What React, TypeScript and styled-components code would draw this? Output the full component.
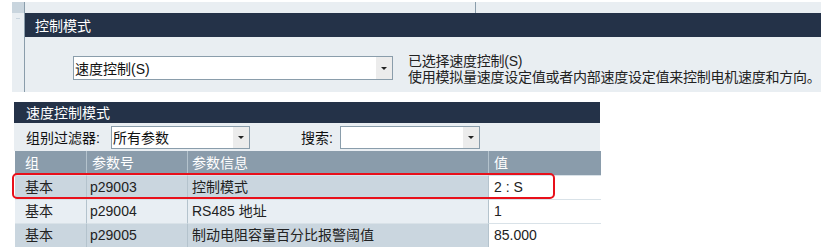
import styled, { createGlobalStyle } from "styled-components";

const GlobalStyle = createGlobalStyle`
  body {
    margin: 0;
    background: #ffffff;
    font-family: "Liberation Sans", "Noto Sans CJK SC", sans-serif;
  }
`;

const Page = styled.div`
  width: 822px;
  height: 249px;
  overflow: hidden;
  background: #ffffff;
  padding-top: 2px;
  box-sizing: border-box;
`;

// 上面的控制模式面板
const TopPanel = styled.div`
  margin-left: 12px;
  width: 809px;
  height: 90px;
  background: #e9eef2;
  display: flex;
`;

const Gutter = styled.div`
  width: 12px;
  flex-shrink: 0;
  border-right: 1px solid #8a9dab;
  display: flex;
  flex-direction: column;
`;

const GutterCap = styled.div`
  height: 11px;
  background: #c9d5de;
  border-bottom: 5px solid #e9eef2;
  box-shadow: 0 5px 0 -4px #c9d5de;
`;

const TopMain = styled.div`
  flex: 1;
  min-width: 0;
  display: flex;
  flex-direction: column;
`;

const TopStrip = styled.div`
  height: 11px;
  display: flex;
`;

const StripCell = styled.div`
  width: 450px;
  border-right: 1px solid #8a9dab;
`;

const SectionHeader = styled.div<{ $h: number; $pad: number }>`
  height: ${(p) => p.$h}px;
  line-height: ${(p) => p.$h}px;
  background: #243248;
  color: #ffffff;
  font-size: 14px;
  padding-left: ${(p) => p.$pad}px;
  font-family: "Noto Sans CJK SC", sans-serif;
`;

const ModeRow = styled.div`
  display: flex;
  align-items: flex-start;
  padding: 19px 0 0 48px;
`;

const Select = styled.div<{ $w: number; $h: number }>`
  width: ${(p) => p.$w}px;
  height: ${(p) => p.$h}px;
  box-sizing: border-box;
  border: 1px solid #8a9dab;
  background: #ffffff;
  display: flex;
  flex-shrink: 0;
`;

const SelectText = styled.div`
  flex: 1;
  padding-left: 1px;
  font-size: 14px;
  color: #111;
  display: flex;
  align-items: center;
  white-space: nowrap;
`;

const ArrowBox = styled.div`
  width: 16px;
  background: #ececec;
  display: flex;
  align-items: center;
  justify-content: center;
`;

const Arrow = styled.div`
  width: 0;
  height: 0;
  border-left: 3px solid transparent;
  border-right: 3px solid transparent;
  border-top: 3px solid #222;
`;

const Desc = styled.div`
  flex: 1;
  margin: -3px 0 0 15px;
  font-size: 14px;
  line-height: 16px;
  letter-spacing: -0.25px;
  color: #222;
  white-space: nowrap;
`;

// 下面的速度控制模式面板
const Panel = styled.div`
  position: relative;
  margin: 10px 0 0 14px;
  width: 586px;
`;

const FilterRow = styled.div`
  height: 28px;
  background: #e9eef2;
  display: flex;
  align-items: center;
  padding-left: 12px;
  font-size: 14px;
  color: #111;
`;

const Label = styled.span<{ $ml?: number; $mr: number }>`
  margin-left: ${(p) => p.$ml ?? 0}px;
  margin-right: ${(p) => p.$mr}px;
  white-space: nowrap;
`;

const Table = styled.div`
  margin-left: 1px;
  display: grid;
  grid-template-columns: 72px 101px 301px 112px;
`;

const HeadCell = styled.div<{ $pad: number; $last?: boolean }>`
  height: 24px;
  line-height: 24px;
  background: #8a9cab;
  color: #ffffff;
  font-size: 14px;
  padding-left: ${(p) => p.$pad}px;
  border-right: ${(p) => (p.$last ? "none" : "1px solid #b4c3cd")};
`;

const Cell = styled.div<{ $bg: string; $pad: number; $last?: boolean }>`
  height: 23px;
  line-height: 23px;
  background: ${(p) => p.$bg};
  font-size: 14px;
  color: #222;
  padding-left: ${(p) => p.$pad}px;
  border-top: 1px solid #d9e2e8;
  border-right: ${(p) => (p.$last ? "none" : "1px solid #b4c3cd")};
  white-space: nowrap;
`;

const Highlight = styled.div`
  position: absolute;
  left: -2px;
  top: 71px;
  width: 543px;
  height: 26px;
  box-sizing: border-box;
  border: 2px solid #e8101a;
  border-radius: 5px;
  pointer-events: none;
`;

const rows = [
  { group: "基本", no: "p29003", info: "控制模式", value: "2 : S", bg: "#cad6df" },
  { group: "基本", no: "p29004", info: "RS485 地址", value: "1", bg: "#e8eef3" },
  { group: "基本", no: "p29005", info: "制动电阻容量百分比报警阈值", value: "85.000", bg: "#cad6df" },
];

const pads = [10, 3, 4, 5];

export default function App() {
  return (
    <Page>
      <GlobalStyle />
      <TopPanel>
        <Gutter>
          <GutterCap />
        </Gutter>
        <TopMain>
          <TopStrip>
            <StripCell />
          </TopStrip>
          <SectionHeader $h={24} $pad={10}>控制模式</SectionHeader>
          <ModeRow>
            <Select $w={320} $h={24}>
              <SelectText>速度控制(S)</SelectText>
              <ArrowBox>
                <Arrow />
              </ArrowBox>
            </Select>
            <Desc>
              已选择速度控制(S)
              <br />
              使用模拟量速度设定值或者内部速度设定值来控制电机速度和方向。
            </Desc>
          </ModeRow>
        </TopMain>
      </TopPanel>

      <Panel>
        <SectionHeader $h={21} $pad={12}>速度控制模式</SectionHeader>
        <FilterRow>
          <Label $mr={11}>组别过滤器:</Label>
          <Select $w={139} $h={23}>
            <SelectText>所有参数</SelectText>
            <ArrowBox>
              <Arrow />
            </ArrowBox>
          </Select>
          <Label $ml={51} $mr={7}>搜索:</Label>
          <Select $w={140} $h={23}>
            <SelectText />
            <ArrowBox>
              <Arrow />
            </ArrowBox>
          </Select>
        </FilterRow>
        <Table>
          <HeadCell $pad={10}>组</HeadCell>
          <HeadCell $pad={5}>参数号</HeadCell>
          <HeadCell $pad={4}>参数信息</HeadCell>
          <HeadCell $pad={5} $last>值</HeadCell>
          {rows.map((r) => (
            <>
              <Cell key={r.no + "g"} $bg={r.bg} $pad={pads[0]}>{r.group}</Cell>
              <Cell key={r.no + "n"} $bg={r.bg} $pad={pads[1]}>{r.no}</Cell>
              <Cell key={r.no + "i"} $bg={r.bg} $pad={pads[2]}>{r.info}</Cell>
              <Cell key={r.no + "v"} $bg="#ffffff" $pad={pads[3]} $last>{r.value}</Cell>
            </>
          ))}
        </Table>
        <Highlight />
      </Panel>
    </Page>
  );
}
